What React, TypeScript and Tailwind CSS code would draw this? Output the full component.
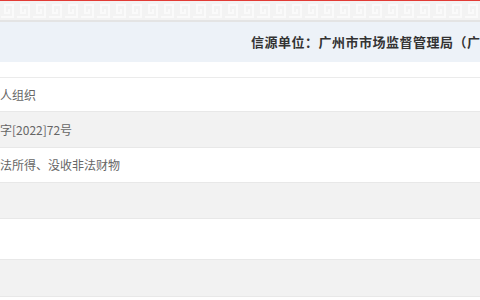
import React from "react";

const rows = [
  { text: "人组织", h: "h-[34px]", bg: "bg-white" },
  { text: "字[2022]72号", h: "h-[36px]", bg: "bg-[#f2f2f2]" },
  { text: "法所得、没收非法财物", h: "h-[35px]", bg: "bg-white" },
  { text: "", h: "h-[36px]", bg: "bg-[#f2f2f2]" },
  { text: "", h: "h-[41px]", bg: "bg-white" },
  { text: "", h: "h-[37px]", bg: "bg-[#f2f2f2]" },
];

function KeyBand() {
  return (
    <svg width="100%" height="19" className="block">
      <defs>
        <pattern id="meander" width="16" height="19" patternUnits="userSpaceOnUse">
          <rect width="16" height="19" fill="#f3f3f3" />
          <path
            d="M1 16 H13 V4 H5 V12 H9 V8"
            fill="none"
            stroke="#fafafa"
            strokeWidth="2"
          />
        </pattern>
      </defs>
      <rect width="100%" height="19" fill="url(#meander)" />
    </svg>
  );
}

export default function App() {
  return (
    <div
      className="w-[480px] h-[300px] overflow-hidden bg-white"
      style={{ fontFamily: '"Noto Sans CJK SC", "Noto Sans", sans-serif' }}
    >
      <div className="h-px bg-[#e23b35]" />
      <KeyBand />
      <div className="h-[2px] bg-[#e4e4e4]" />

      {/* source header */}
      <div className="h-[40px] bg-[#edf2f8] flex items-center pl-[251px] overflow-hidden">
        <span className="whitespace-nowrap text-[13px] tracking-[0.5px] font-bold text-[#333]">
          信源单位：广州市市场监督管理局（广
        </span>
      </div>

      <div className="h-[16px] bg-white border-b border-[#ebebeb]" />

      {rows.map((r, i) => (
        <div
          key={i}
          className={`${r.h} ${r.bg} border-b border-[#e8e8e8] flex items-center overflow-hidden`}
        >
          <span className="whitespace-nowrap text-[12px] text-[#666]">{r.text}</span>
        </div>
      ))}
    </div>
  );
}
